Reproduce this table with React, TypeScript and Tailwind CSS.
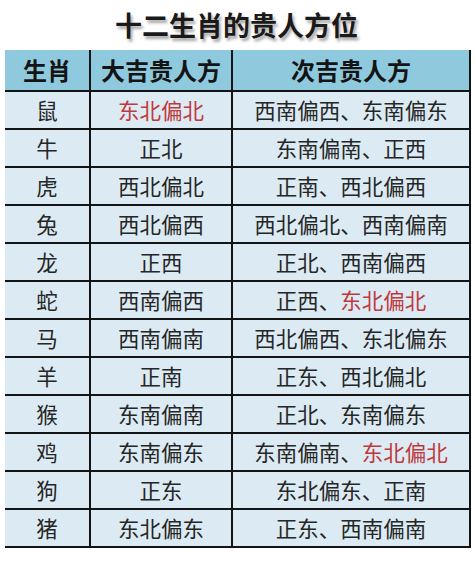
import React from "react";

type Seg = { t: string; red?: boolean };
const rows: { a: string; b: Seg[]; c: Seg[] }[] = [
  { a: "鼠", b: [{ t: "东北偏北", red: true }], c: [{ t: "西南偏西、东南偏东" }] },
  { a: "牛", b: [{ t: "正北" }], c: [{ t: "东南偏南、正西" }] },
  { a: "虎", b: [{ t: "西北偏北" }], c: [{ t: "正南、西北偏西" }] },
  { a: "兔", b: [{ t: "西北偏西" }], c: [{ t: "西北偏北、西南偏南" }] },
  { a: "龙", b: [{ t: "正西" }], c: [{ t: "正北、西南偏西" }] },
  { a: "蛇", b: [{ t: "西南偏西" }], c: [{ t: "正西、" }, { t: "东北偏北", red: true }] },
  { a: "马", b: [{ t: "西南偏南" }], c: [{ t: "西北偏西、东北偏东" }] },
  { a: "羊", b: [{ t: "正南" }], c: [{ t: "正东、西北偏北" }] },
  { a: "猴", b: [{ t: "东南偏南" }], c: [{ t: "正北、东南偏东" }] },
  { a: "鸡", b: [{ t: "东南偏东" }], c: [{ t: "东南偏南、" }, { t: "东北偏北", red: true }] },
  { a: "狗", b: [{ t: "正东" }], c: [{ t: "东北偏东、正南" }] },
  { a: "猪", b: [{ t: "东北偏东" }], c: [{ t: "正东、西南偏南" }] },
];

const Segs = ({ s }: { s: Seg[] }) => (
  <>
    {s.map((x, i) => (
      <span key={i} className={x.red ? "text-[#c0393d]" : ""}>
        {x.t}
      </span>
    ))}
  </>
);

export default function App() {
  return (
    <div
      className="w-[475px] h-[563px] bg-white overflow-hidden"
      style={{ fontFamily: '"Noto Sans CJK SC", "Noto Sans", sans-serif' }}
    >
      <div className="h-[50px] flex items-start justify-center pt-[7px]">
        <div className="text-[27px] leading-[36px] font-bold text-[#1a1a1a] [text-shadow:2px_3px_3px_rgba(0,0,0,0.35)] ml-[-2px]">
          十二生肖的贵人方位
        </div>
      </div>
      <div className="ml-[5px] w-[466px] flex flex-col">
        <div className="flex h-[42px] bg-[#8fc9de] border-b-2 border-[#141414] text-[24px] font-bold text-[#141414]">
          <div className="w-[86px] border-r-2 border-[#141414] flex items-center justify-center">生肖</div>
          <div className="w-[142px] border-r-2 border-[#141414] flex items-center justify-center">大吉贵人方</div>
          <div className="w-[238px] border-r-2 border-[#141414] flex items-center justify-center">次吉贵人方</div>
        </div>
        {rows.map((r, i) => (
          <div
            key={i}
            className="flex h-[38px] bg-[#dcebf3] border-b-2 border-[#141414] text-[21.5px] text-[#262626]"
          >
            <div className="w-[86px] border-r-2 border-[#141414] flex items-center justify-center">{r.a}</div>
            <div className="w-[142px] border-r-2 border-[#141414] flex items-center justify-center">
              <Segs s={r.b} />
            </div>
            <div className="w-[238px] border-r-2 border-[#141414] flex items-center justify-center">
              <Segs s={r.c} />
            </div>
          </div>
        ))}
      </div>
    </div>
  );
}
